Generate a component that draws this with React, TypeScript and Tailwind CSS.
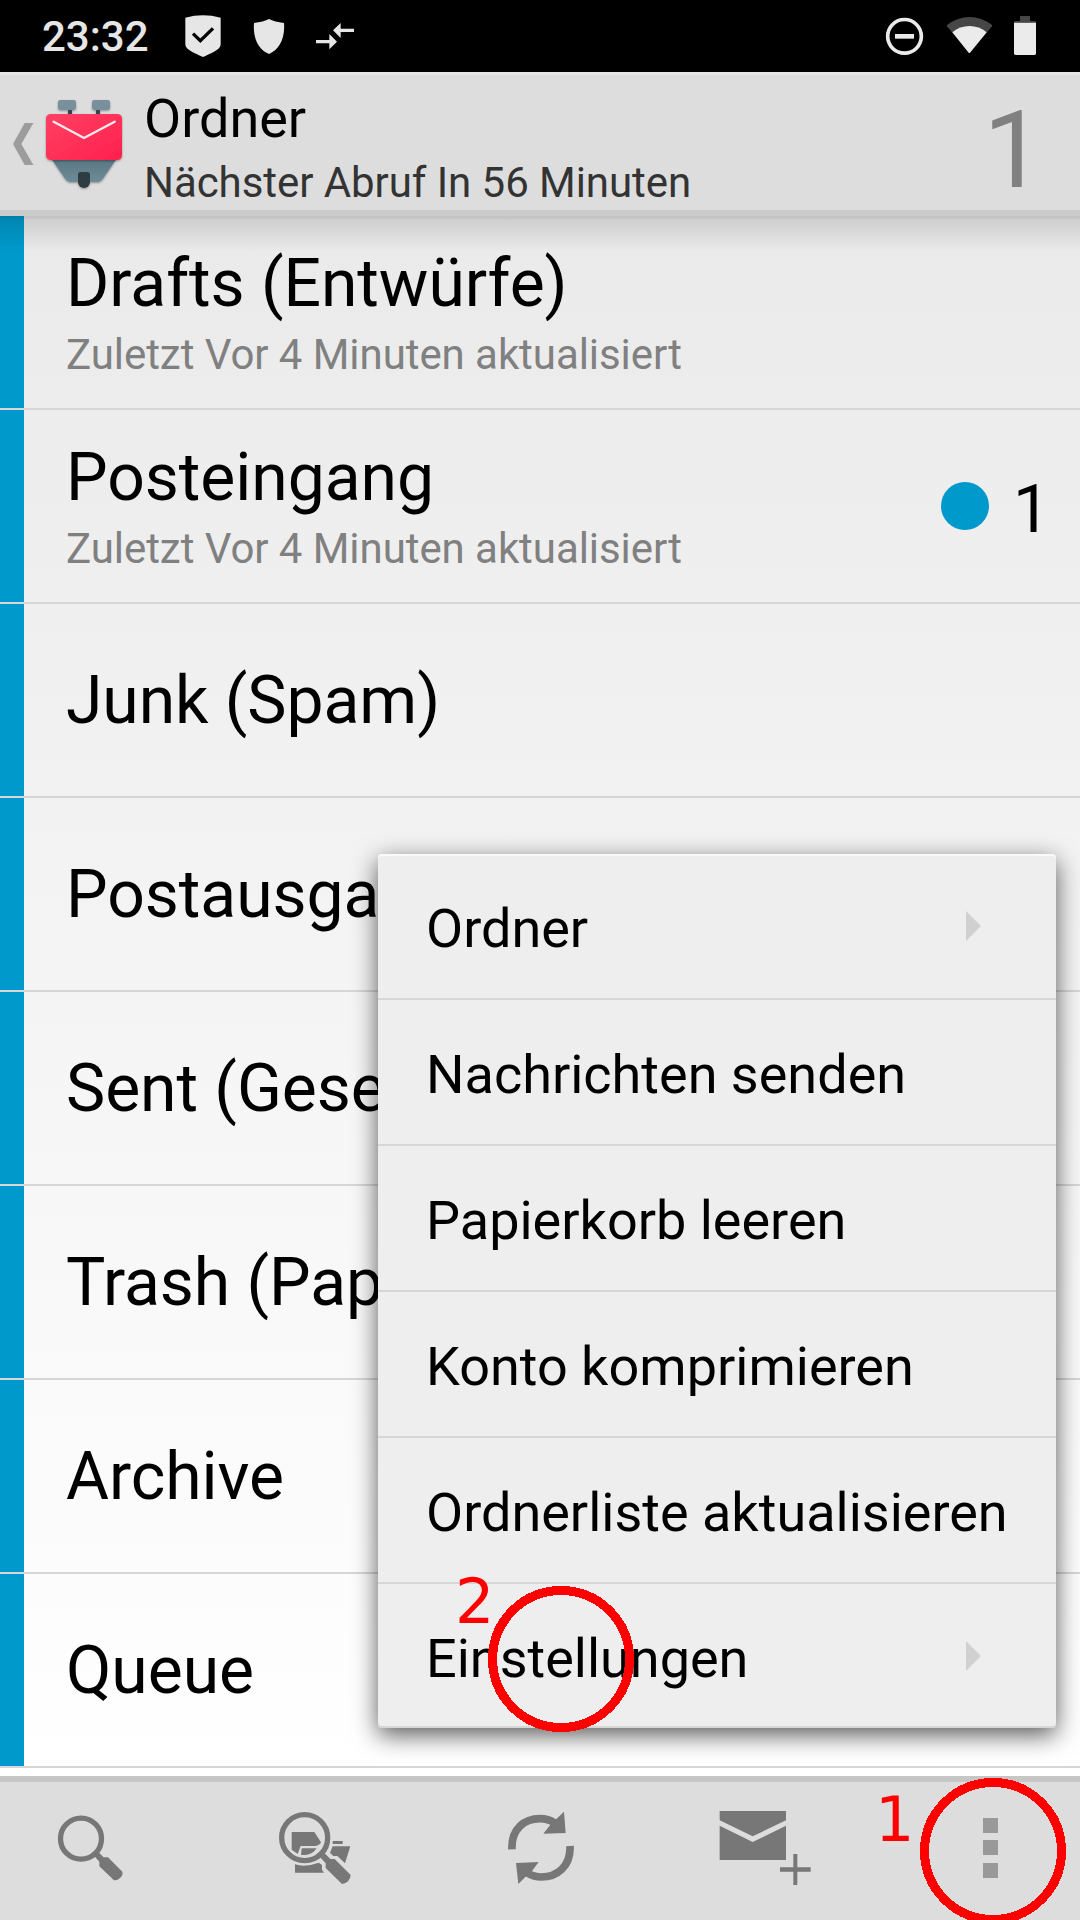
import React from "react";

type Folder = { name: string; note?: string; unread?: number };

const folders: Folder[] = [
  { name: "Drafts (Entwürfe)", note: "Zuletzt Vor 4 Minuten aktualisiert" },
  { name: "Posteingang", note: "Zuletzt Vor 4 Minuten aktualisiert", unread: 1 },
  { name: "Junk (Spam)" },
  { name: "Postausgang" },
  { name: "Sent (Gesendet)" },
  { name: "Trash (Papierkorb)" },
  { name: "Archive" },
  { name: "Queue" },
];

const menuItems = [
  { label: "Ordner", submenu: true },
  { label: "Nachrichten senden" },
  { label: "Papierkorb leeren" },
  { label: "Konto komprimieren" },
  { label: "Ordnerliste aktualisieren" },
  { label: "Einstellungen", submenu: true },
];

function StatusBar() {
  return (
    <div className="flex h-[72px] shrink-0 items-center bg-black">
      <span className="ml-[42px] w-[118px] pt-[2px] text-[42px] leading-[72px] font-medium whitespace-nowrap text-[#e6e6e6]">23:32</span>
      <svg className="h-[72px] w-[220px]" viewBox="480 0 660 216" fill="#e6e6e6">
        <path d="M556 53Q609 39 662 53V134C660 150 632 160 609 171C586 160 558 150 556 134Z" />
        <path d="M579 101L601 122L639 85" fill="none" stroke="#000" strokeWidth="10" />
        <path d="M762 69C780 67 797 63 807 57C817 63 834 67 852 69C856 118 836 150 807 162C778 150 758 118 762 69Z" />
        <path d="M948 120H988V102L1011 125L988 148V130H948ZM1062 86H1022V69L999 91L1022 114V96H1062Z" />
      </svg>
      <svg className="ml-auto h-[72px] w-[220px]" viewBox="0 0 660 216" fill="#ebebeb">
        <circle cx="133.500" cy="109" r="50.500" fill="none" stroke="#ebebeb" strokeWidth="11" />
        <rect x="105" y="102" width="57" height="14" />
        <path d="M261 75Q293 51 328.500 51Q364 51 396 75V79L328.500 159L261 79Z" fill="#464646" />
        <path d="M277 97Q300 78 328.500 78Q357 78 380 97L330 158Q328 160 326 158Z" />
        <path d="M462 68V66Q462 63 466 63H480V48H510V63H524Q528 63 528 66V68Z" fill="#464646" />
        <path d="M462 68H528V160Q528 165 523 165H467Q462 165 462 160Z" />
      </svg>
    </div>
  );
}

function AppIcon() {
  return (
    <svg className="h-[138px] w-[130px] shrink-0" viewBox="0 216 390 414">
      <defs>
        <linearGradient id="mail" x1="0" y1="0" x2="1" y2="1">
          <stop offset="0" stopColor="#ff4063" />
          <stop offset="1" stopColor="#ff204e" />
        </linearGradient>
        <linearGradient id="steel" x1="0" y1="0" x2="0" y2="1">
          <stop offset="0" stopColor="#587682" />
          <stop offset="1" stopColor="#6f8b98" />
        </linearGradient>
        <filter id="soft" x="-10%" y="-10%" width="120%" height="125%">
          <feDropShadow dx="0" dy="3" stdDeviation="2.500" floodOpacity="0.35" />
        </filter>
      </defs>
      <path d="M74 369H100L64 432L100 495H74L39 432Z" fill="#9c9c9c" />
      <g filter="url(#soft)">
        <rect x="204" y="326" width="12" height="20" fill="#37474f" />
        <rect x="288" y="326" width="12" height="20" fill="#37474f" />
        <rect x="174" y="300" width="54" height="30" rx="7" fill="#78909c" />
        <rect x="276" y="300" width="54" height="30" rx="7" fill="#78909c" />
        <path d="M154 476H350L309 536Q302 546 290 546H214Q202 546 195 536Z" fill="url(#steel)" />
        <path d="M234 524Q234 516 242 516H262Q270 516 270 524V546A18 18 0 0 1 234 546Z" fill="#2f3c43" />
      </g>
      <rect x="138" y="342" width="228" height="138" rx="14" fill="url(#mail)" filter="url(#soft)" />
      <path d="M161 365L252 414L344 365" fill="none" stroke="#ffe9ee" strokeWidth="7" strokeLinecap="round" />
    </svg>
  );
}

function Header() {
  return (
    <header className="flex h-[144px] shrink-0 border-b-[6px] border-[#cbcbcb] bg-[#dddddd] shadow-[inset_0_3px_0_#e6e6e6]">
      <AppIcon />
      <div className="ml-[14px] flex flex-col pt-[15px] whitespace-nowrap">
        <h1 className="text-[54px] leading-[64px] text-black">Ordner</h1>
        <p className="text-[42px] leading-[64px] tracking-[-0.06px] text-[#333333]">Nächster Abruf In 56 Minuten</p>
      </div>
      <span className="mr-[36px] ml-auto pt-[14px] text-[108px] leading-[128px] text-[#808080]">1</span>
    </header>
  );
}

function FolderRow({ folder }: { folder: Folder }) {
  return (
    <li className="flex h-[194px] border-b-2 border-[#d6d6d6]">
      <span className="w-6 bg-[#0099cc]" />
      <div className={folder.note ? "ml-[42px] flex flex-1 flex-col justify-center pt-1 whitespace-nowrap" : "ml-[42px] flex flex-1 flex-col justify-center pt-[1px] whitespace-nowrap"}>
        <span className="text-[66px] leading-[78px] tracking-[-0.05px] text-black">{folder.name}</span>
        {folder.note && <span className="-mb-[3px] text-[42px] leading-[64px] tracking-[-0.06px] text-[#808080]">{folder.note}</span>}
      </div>
      {folder.unread && (
        <div className="mr-[30px] flex items-center gap-[24px]">
          <span className="h-12 w-12 rounded-full bg-[#0099cc]" />
          <span className="pt-[7px] text-[66px] leading-[78px] text-black">{folder.unread}</span>
        </div>
      )}
    </li>
  );
}

function OverflowMenu() {
  return (
    <div className="absolute top-[638px] left-[378px] w-[678px] rounded-[4px] bg-[#eeeeee] shadow-[inset_0_2px_0_#fafafa,inset_0_-2px_0_#d6d6d6,0_7px_24px_rgba(0,0,0,0.65)]">
      {menuItems.map((item, i) => (
        <div key={item.label} className={i < 5 ? "flex h-[146px] items-center border-b-2 border-[#d6d6d6] pl-12" : "flex h-[144px] items-center pl-12"}>
          <span className="pt-[5px] text-[54px] leading-[64px] whitespace-nowrap text-black">{item.label}</span>
          {item.submenu && (
            <svg className="mr-[75px] ml-auto h-[30px] w-[15px]" viewBox="0 0 15 30">
              <path d="M0 0L15 15L0 30Z" fill="#d0d0d0" />
            </svg>
          )}
        </div>
      ))}
    </div>
  );
}

function Toolbar() {
  return (
    <footer className="flex h-[144px] shrink-0 border-t-[6px] border-[#c6c6c6] bg-[#dddddd]">
      <svg className="h-[138px] w-[216px]" viewBox="0 126 648 414" fill="#777">
        <circle cx="243" cy="296" r="61.500" fill="none" stroke="#777" strokeWidth="16" />
        <path d="M282 347L294 335L311 352H324L367 395Q370 404 361 413Q352 422 342 421L298 379V365Z" />
      </svg>
      <svg className="h-[138px] w-[216px]" viewBox="648 126 648 414" fill="#777">
        <path d="M875 276H943L963 307Q958 317 946 318H902L893 342L875 329Z" />
        <path d="M905 325H950L941 335Q925 347 903 345Z" />
        <path d="M998 303H1028V312H998Z" />
        <path d="M998 319H1051L1035 370L1012 348H1000L990 339Z" />
        <path d="M885 373Q915 383 956 368L966 375V389L972 398H885Z" />
        <circle cx="914" cy="293" r="69" fill="none" stroke="#777" strokeWidth="16" />
        <path d="M960 351L973 339L991 357H1004L1052 405Q1052 414 1044 424Q1036 432 1026 432L977 384V370Z" />
      </svg>
      <svg className="h-[138px] w-[216px]" viewBox="-144 126 648 414" fill="#777">
        <path d="M96 328C93 265 135 236 180 236Q205 236 224 249M270 318C273 380 230 411 184 411Q162 411 141 398" fill="none" stroke="#777" strokeWidth="23" />
        <path d="M252 215L257 279L190 281L211 254L229 237Z" />
        <path d="M115 432L108 369L176 366L156 393L136 411Z" />
      </svg>
      <svg className="h-[138px] w-[216px]" viewBox="504 126 648 414" fill="#777">
        <path d="M719 213H918V241L818 289L719 241ZM719 257L818 306L918 257V360H719Z" />
        <path d="M940 342H952V382H992V395H952V435H940V395H900V382H940Z" />
      </svg>
      <svg className="h-[138px] w-[216px]" viewBox="72 126 648 414" fill="#999">
        <path d="M429 234H474V279H429ZM429 300H474V345H429ZM429 369H474V414H429Z" />
      </svg>
    </footer>
  );
}

function Ring({ className }: { className: string }) {
  return (
    <svg className={className} viewBox="0 0 146 146" shapeRendering="crispEdges">
      <circle cx="73" cy="73" r="68.500" fill="none" stroke="#ff0000" strokeWidth="9" />
    </svg>
  );
}

export default function App() {
  return (
    <div className="relative flex h-[1920px] w-[1080px] flex-col overflow-hidden font-['Roboto',sans-serif]">
      <StatusBar />
      <Header />
      <main className="relative h-[1560px] shrink-0 overflow-hidden bg-linear-to-b from-[#eaeaea] to-[#ffffff]">
        <ul>
          {folders.map((f) => (
            <FolderRow key={f.name} folder={f} />
          ))}
        </ul>
        <div className="absolute inset-x-0 top-0 h-[36px] bg-linear-to-b from-black/13 to-transparent shadow-[inset_0_3px_0_rgba(0,0,0,0.04)]" />
        <OverflowMenu />
      </main>
      <Toolbar />
      <Ring className="absolute top-[1778px] left-[920px] h-[146px] w-[146px]" />
      <Ring className="absolute top-[1586px] left-[488px] h-[146px] w-[146px]" />
      <span className="absolute top-[1784px] left-[875px] font-['DejaVu_Sans',sans-serif] text-[62px] leading-[72px] text-[#ff0000]">1</span>
      <span className="absolute top-[1566px] left-[455px] font-['DejaVu_Sans',sans-serif] text-[62px] leading-[72px] text-[#ff0000]">2</span>
    </div>
  );
}
